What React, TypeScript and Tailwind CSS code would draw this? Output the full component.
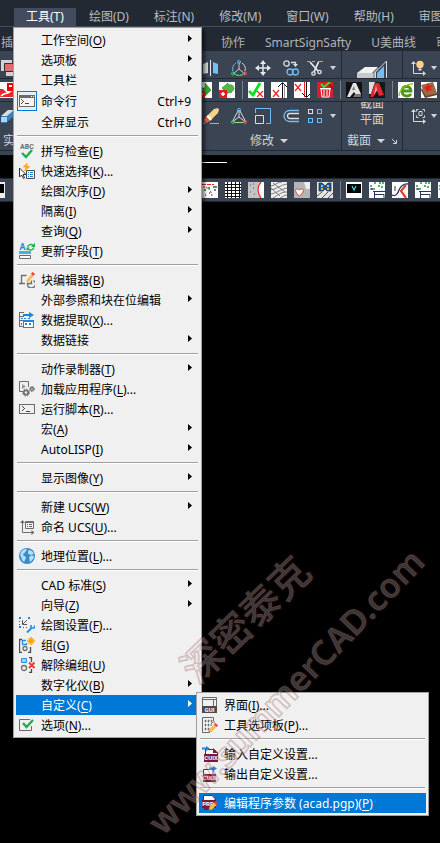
import { ReactNode } from 'react'

type MenuEntry =
  | { kind: 'separator' }
  | {
      kind: 'item'
      label: string
      mnemonic?: string
      suffix?: string
      icon?: string
      shortcut?: string
      submenu?: boolean
      checked?: boolean
      active?: boolean
    }

const separator: MenuEntry = { kind: 'separator' }

const toolsMenu: MenuEntry[] = [
  { kind: 'item', label: '工作空间', mnemonic: 'O', submenu: true },
  { kind: 'item', label: '选项板', submenu: true },
  { kind: 'item', label: '工具栏', submenu: true },
  { kind: 'item', label: '命令行', icon: 'commandLine', shortcut: 'Ctrl+9', checked: true },
  { kind: 'item', label: '全屏显示', shortcut: 'Ctrl+0' },
  separator,
  { kind: 'item', label: '拼写检查', mnemonic: 'E', icon: 'spelling' },
  { kind: 'item', label: '快速选择', mnemonic: 'K', suffix: '...', icon: 'quickSelect' },
  { kind: 'item', label: '绘图次序', mnemonic: 'D', submenu: true },
  { kind: 'item', label: '隔离', mnemonic: 'I', submenu: true },
  { kind: 'item', label: '查询', mnemonic: 'Q', submenu: true },
  { kind: 'item', label: '更新字段', mnemonic: 'T', icon: 'updateField' },
  separator,
  { kind: 'item', label: '块编辑器', mnemonic: 'B', icon: 'blockEditor' },
  { kind: 'item', label: '外部参照和块在位编辑', submenu: true },
  { kind: 'item', label: '数据提取', mnemonic: 'X', suffix: '...', icon: 'dataExtract' },
  { kind: 'item', label: '数据链接', submenu: true },
  separator,
  { kind: 'item', label: '动作录制器', mnemonic: 'T', submenu: true },
  { kind: 'item', label: '加载应用程序', mnemonic: 'L', suffix: '...', icon: 'loadApp' },
  { kind: 'item', label: '运行脚本', mnemonic: 'R', suffix: '...', icon: 'script' },
  { kind: 'item', label: '宏', mnemonic: 'A', submenu: true },
  { kind: 'item', label: 'AutoLISP', mnemonic: 'I', submenu: true },
  separator,
  { kind: 'item', label: '显示图像', mnemonic: 'Y', submenu: true },
  separator,
  { kind: 'item', label: '新建 UCS', mnemonic: 'W', submenu: true },
  { kind: 'item', label: '命名 UCS', mnemonic: 'U', suffix: '...', icon: 'namedUcs' },
  separator,
  { kind: 'item', label: '地理位置', mnemonic: 'L', suffix: '...', icon: 'globe' },
  separator,
  { kind: 'item', label: 'CAD 标准', mnemonic: 'S', submenu: true },
  { kind: 'item', label: '向导', mnemonic: 'Z', submenu: true },
  { kind: 'item', label: '绘图设置', mnemonic: 'F', suffix: '...', icon: 'drafting' },
  { kind: 'item', label: '组', mnemonic: 'G', icon: 'group' },
  { kind: 'item', label: '解除编组', mnemonic: 'U', icon: 'ungroup' },
  { kind: 'item', label: '数字化仪', mnemonic: 'B', submenu: true },
  { kind: 'item', label: '自定义', mnemonic: 'C', submenu: true, active: true },
  { kind: 'item', label: '选项', mnemonic: 'N', suffix: '...', icon: 'options' },
]

const customizeMenu: MenuEntry[] = [
  { kind: 'item', label: '界面', mnemonic: 'I', suffix: '...', icon: 'gui' },
  { kind: 'item', label: '工具选项板', mnemonic: 'P', suffix: '...', icon: 'toolPalette' },
  separator,
  { kind: 'item', label: '输入自定义设置...', icon: 'importCuix' },
  { kind: 'item', label: '输出自定义设置...', icon: 'exportCuix' },
  separator,
  { kind: 'item', label: '编辑程序参数 (acad.pgp)', mnemonic: 'P', icon: 'pgp', active: true },
]

const menuBar = ['工具(T)', '绘图(D)', '标注(N)', '修改(M)', '窗口(W)', '帮助(H)', '审图标记']
const ribbonTabs = ['协作', 'SmartSignSafty', 'U美曲线', '审图']

const pencil = (
  <g>
    <path d="M6.5 15.5 7.5 12 12 7.5 14.5 10 10 14.5Z" fill="#f6bd4a" />
    <path d="m12 7.5 1.5-1.5 2.5 2.5-1.5 1.5Z" fill="#ee3b3b" />
    <path d="m6.5 15.5.5-2 1.5 1.5Z" fill="#666" />
  </g>
)

const cuixPage = (
  <g>
    <path d="M3.5 9V3.500H12L15.500 7v2Z" fill="#fff" stroke="#7a1b36" />
    <path d="M11 2l5 5h-5Z" fill="#7a1b36" />
    <path d="M2 8h14v8H2Z" fill="#7a1b36" />
    <text x="9" y="14" fontSize="6" fontWeight="700" textAnchor="middle" fill="#fff">
      CUIX
    </text>
  </g>
)

const glyphs: Record<string, ReactNode> = {
  // menu icons
  commandLine: (
    <g shapeRendering="crispEdges">
      <path d="M0 2h16v12H0Z" fill="#6a6a6a" />
      <path d="M1 5h14v8H1Z" fill="#f4f4f4" />
      <path d="M12 3h1v1h-1ZM14 3h1v1h-1Z" fill="#fff" />
      <path d="M2 6h1v1H2ZM3 7h1v1H3ZM4 8h1v1H4ZM3 9h1v1H3ZM2 10h1v1H2ZM6 10h4v1H6Z" fill="#444" />
    </g>
  ),
  spelling: (
    <g>
      <text x="8" y="5.500" fontSize="7" fontWeight="700" textAnchor="middle" fill="#6b6b6b">
        ABC
      </text>
      <path d="m3 10 4 4 6-7" fill="none" stroke="#22ad4e" strokeWidth="2.400" />
    </g>
  ),
  quickSelect: (
    <g>
      <path d="m8.500 0-4.500 4h3L5.500 8l5.500-4.500H8Z" fill="#fba615" stroke="#fba615" strokeWidth=".5" />
      <path d="M.5 5v9l2-2 2 3.500 1-.5-1.500-3.500H7Z" fill="#fff" stroke="#333" />
      <path d="M7.500 7.500h8v8h-8Z" fill="#fff" stroke="#4b4b4b" />
      <path d="M9 9.500h1m1 0h3M9 11.500h1m1 0h3M9 13.500h1m1 0h3" stroke="#1c7fd6" />
    </g>
  ),
  updateField: (
    <g>
      <text x="3.500" y="7" fontSize="9" fontWeight="700" textAnchor="middle" fill="#2b86cf">
        A
      </text>
      <path d="M8.500 4a3.500 3 0 0 1 6-1.500M15 4.500a3.500 3 0 0 1-6 1.500" fill="none" stroke="#25ad52" strokeWidth="1.300" />
      <path d="M16 0v4h-4ZM7.500 8V4.500H11Z" fill="#25ad52" />
      <path d="M0 8h12v3H0Z" fill="#55aae4" />
      <path d="M.5 12.500h11v3H.5Z" fill="#fff" stroke="#6a6a6a" />
    </g>
  ),
  blockEditor: (
    <g fill="none" stroke="#6d6d6d">
      <path d="M2.500 11.500v-8h5M0 11.500h6" strokeWidth="1.300" />
      <path d="M14.500 8.500a4 4 0 1 1-6 3h4v-3" strokeWidth="1.300" />
      <path d="m7.500 8 5-6 2 2-5 6-2 .5Z" fill="#f7be50" stroke="none" />
      <path d="m12 1.500 1.500-1.500L16 2l-1.500 2Z" fill="#ee3b3b" stroke="none" />
    </g>
  ),
  dataExtract: (
    <g shapeRendering="crispEdges">
      <path d="M5 .5H.5v14H4M.5 4.500H5M.5 8.500H4" stroke="#6a6a6a" fill="none" />
      <path d="M4 2h6v2H4Z" fill="#1c86de" />
      <path d="M10 0l5 3-5 3Z" fill="#1c86de" shapeRendering="auto" />
      <path d="M2 6h2v1H2ZM5 6h2v1H5ZM9 6h2v1H9ZM2 11h1v2H2Z" fill="#1c86de" />
      <path d="M4 8h11v8H4Z" fill="#1c86de" />
      <path d="M5 10h9v5H5Z" fill="#fff" />
      <path d="M6 11h2v2H6ZM10 11h2v2h-2Z" fill="#1c86de" />
    </g>
  ),
  loadApp: (
    <g fill="none" stroke="#6d6d6d">
      <path d="M4 10.500H.5V.5h9V6" />
      <path d="M3 3v5l4-2.500Z" fill="#999" stroke="none" />
      <circle cx="7" cy="11.500" r="2.200" strokeWidth="1.800" />
      <circle cx="7" cy="11.500" r="3.600" strokeDasharray="1.400 1.400" />
      <circle cx="13" cy="8" r="1.500" strokeWidth="1.300" />
      <circle cx="13" cy="8" r="2.500" strokeDasharray="1 1" />
    </g>
  ),
  script: (
    <g shapeRendering="crispEdges">
      <path d="M.5 3.500h15v9H.5Z" fill="none" stroke="#6a6a6a" />
      <path d="M3 5h1v1H3ZM4 6h1v1H4ZM5 7h1v1H5ZM4 8h1v1H4ZM3 9h1v1H3ZM7 10h4v1H7Z" fill="#444" />
    </g>
  ),
  namedUcs: (
    <g fill="none" stroke="#6d6d6d">
      <path d="M3.500 2v11.500H14" />
      <path d="m1 4 2.500-3L6 4Zm11.500 7 3 2.500-3 2.500Z" fill="#6d6d6d" stroke="none" />
      <path d="M6.500 2.500h8v7h-8ZM6 3.500h9" />
      <path d="M8 5.500h1m1 0h3m-5 2h1m1 0h3" />
    </g>
  ),
  globe: (
    <g>
      <circle cx="8" cy="8" r="8" fill="#3989c9" />
      <path d="M2 4c2-3 4-3 6-3-1 2-1 3-2 3 0 2-2 1-2 3 1 1 3 1 3 3-1 1-1 3-2 4-2-1-2-3-3-5S1 6 2 4ZM10 2c2 0 4 2 5 4-2 0-2 1-3 1-1-1-3 0-3-2s0-2 1-3ZM11 8c2-1 4 0 4 1-1 3-3 4-4 5-1-1 0-3-1-4Z" fill="#b3def8" />
    </g>
  ),
  drafting: (
    <g>
      <path d="M0 0h2v2H0ZM9 0h2v2H9ZM0 9h2v2H0Z" fill="#1c86de" />
      <path d="M4 10.500h1m2 0h1M.5 4v1m0 2v1" stroke="#555" />
      <path d="m8 3-4 4M3.500 3v4.500H8" fill="none" stroke="#555" />
      <path d="m8 15.500 4.500-4.500" stroke="#2f8fde" strokeWidth="2" />
      <path d="M12 8v3h3L16 8.500" fill="none" stroke="#2f8fde" strokeWidth="1.600" />
    </g>
  ),
  group: (
    <g fill="none">
      <path d="M3 2.500H.5v13H3M9 15.500h2.500V10" stroke="#4a4a4a" strokeWidth="1.300" />
      <path d="M7 3.500H3.500v4h4V6" stroke="#2b8fe0" strokeWidth="1.300" />
      <circle cx="6" cy="11.500" r="2" stroke="#707070" strokeWidth="1.300" />
      <path d="M12 0v8M8 4h8M9.500 1.500l5 5M14.500 1.500l-5 5" stroke="#fba615" strokeWidth="1.600" />
    </g>
  ),
  ungroup: (
    <g fill="none">
      <path d="M10 .5h2.500V5M10 15.500h2.500V12" stroke="#4a4a4a" strokeWidth="1.300" />
      <path d="M2.500 1.500h5v4h-5Z" fill="#9fd0f5" stroke="#2b8fe0" />
      <circle cx="5" cy="11" r="2.500" stroke="#707070" strokeWidth="1.300" />
      <path d="m10 5.500 5.500 5.500m0-5.500L10 11" stroke="#ee3b3b" strokeWidth="2" />
    </g>
  ),
  options: (
    <g fill="none">
      <path d="M11 2.500H.5v11h12V9" stroke="#6a6a6a" />
      <path d="m4 6 3.500 4L14 3" stroke="#22ad4e" strokeWidth="2.400" />
    </g>
  ),
  gui: (
    <g>
      <path d="M.5.5h14v14H.5ZM0 2.500h15M11.500 3v6" fill="none" stroke="#6a6a6a" />
      <path d="M0 9h15v7H0Z" fill="#4a4a4a" />
      <text x="7.500" y="15" fontSize="6" fontWeight="700" textAnchor="middle" fill="#fff">
        GUI
      </text>
    </g>
  ),
  toolPalette: (
    <g>
      <path d="M8 15.500H.5V.5h11V4" fill="none" stroke="#6a6a6a" />
      <path d="M3 3h1v2H3ZM6 3h1v2H6ZM9 3h1v2H9ZM3 7h1v2H3ZM6 7h1v2H6ZM3 11h1v2H3ZM6 11h1v2H6Z" fill="#6a6a6a" stroke="#6a6a6a" strokeWidth=".5" />
      <path d="M9 9c0-3 1-4 4-4" fill="none" stroke="#777" />
      {pencil}
    </g>
  ),
  importCuix: (
    <g>
      {cuixPage}
      <path d="M0 1.500h4V0l4 2.500L4 5V3.500H0Z" fill="#1c86de" />
    </g>
  ),
  exportCuix: (
    <g transform="translate(-1 0)">
      <path d="M2.500 9V3.500H12V9Z" fill="#fff" stroke="#7a1b36" />
      <path d="M2 8h13v8H2Z" fill="#7a1b36" />
      <text x="8.500" y="14" fontSize="6" fontWeight="700" textAnchor="middle" fill="#fff">
        CUIX
      </text>
      <path d="M8 1.500h4V0l4 2.500L12 5V3.500H8Z" fill="#1c86de" />
    </g>
  ),
  pgp: (
    <g>
      <path d="M1.500 6V.5H10l3 3V6" fill="#fff" stroke="#7a1b36" />
      <path d="M0 5h14v8H0Z" fill="#7a1b36" />
      <path d="M2 14h6" stroke="#7a1b36" strokeWidth="2" />
      <text x="6" y="11" fontSize="6" fontWeight="700" textAnchor="middle" fill="#fff">
        PRP
      </text>
      {pencil}
    </g>
  ),

  // ribbon icons
  union: (
    <g>
      <path d="M1 0h11v11H1Z" fill="#d2d2d2" />
      <path d="M6 12h8v4H6Z" fill="#d0d0d0" />
      <path d="M4.500 3.500h9v8h-9Z" fill="#e5696c" stroke="#333" />
    </g>
  ),
  solid: (
    <g>
      <path d="m1 9 7-7h6v6l-8 7H1Z" fill="#3f7fb6" />
      <path d="m1 8 7-6h6l-7 6H1Z" fill="#d9dde2" />
      <path d="M1 9h6v5H1Z" fill="#a9d6f7" />
    </g>
  ),
  mirror: (
    <g>
      <path d="m0 4 5-2v11l-5 1Z" fill="#d2d2d2" />
      <path d="M7.500 0v16" stroke="#e8e8e8" />
      <path d="m10 2 5 2v10l-5-1Z" fill="#74bdf5" />
    </g>
  ),
  rotate3d: (
    <g fill="none">
      <path d="M8 2v7M8 9l-6 5M8 9l6 5" stroke="#c7cbd1" />
      <path d="M5 3C2 5 1 8 2 11" stroke="#7cbdf0" />
      <path d="M11 3c3 2 4 5 3 8" stroke="#d6dade" />
      <path d="M4 14c3 2 6 2 8 0" stroke="#40c57c" strokeWidth="1.300" />
      <circle cx="8" cy="2" r="1.500" stroke="#61b5f4" />
      <circle cx="2" cy="13.500" r="1.500" stroke="#40c57c" />
      <circle cx="14" cy="13.500" r="1.500" stroke="#ee6262" />
    </g>
  ),
  move: (
    <g fill="none" stroke="#e6e6e6">
      <path d="M8 2v12M2 8h12" strokeWidth="1.500" />
      <path d="m5 4 3-4 3 4Zm0 8 3 4 3-4ZM4 5 0 8l4 3Zm8 0 4 3-4 3Z" fill="#e6e6e6" stroke="none" />
    </g>
  ),
  copy: (
    <g fill="none" strokeWidth="1.300">
      <circle cx="3.500" cy="3.500" r="2.700" stroke="#dedede" />
      <path d="M8 2.500h4.500V5" stroke="#dedede" />
      <path d="M10 4h5l-2.500 3Z" fill="#dedede" stroke="none" />
      <circle cx="7" cy="12" r="3" stroke="#70bdf5" />
      <circle cx="12.500" cy="12" r="3" stroke="#70bdf5" />
    </g>
  ),
  trim: (
    <g fill="none">
      <path d="M0 1.500h3m2 0h3m3 0h5" stroke="#70bdf5" />
      <path d="m3 2 8 9M11.500 2 7 12" stroke="#e6e6e6" strokeWidth="1.800" />
      <circle cx="6.500" cy="13.500" r="1.700" stroke="#e6e6e6" strokeWidth="1.300" />
      <circle cx="12.500" cy="12" r="1.700" stroke="#e6e6e6" strokeWidth="1.300" />
    </g>
  ),
  erase: (
    <g>
      <path d="m3 9 8-8 4-1 1 2-1 3-8 8Z" fill="#f5d183" />
      <path d="m3 9 4 4-3 2-3-1v-3Z" fill="#f2543f" />
      <path d="m3.500 8.500 4 4 1.500-1.500-4-4Z" fill="#fff" />
      <path d="M0 15.500h2m5 0h9" stroke="#70bdf5" />
    </g>
  ),
  scale3d: (
    <g fill="none">
      <path d="M7.500 2 1.500 13.500M8.500 2l6 11.500M8 2v7l-6 4.500M8 9l6 4.500" stroke="#dadada" />
      <path d="M3 14.500h10" stroke="#9edb8a" />
      <circle cx="8" cy="1.800" r="1.500" stroke="#61b5f4" />
      <circle cx="2" cy="14" r="1.500" stroke="#40c57c" />
      <circle cx="14" cy="14" r="1.500" stroke="#ee6262" />
    </g>
  ),
  scale: (
    <g fill="none">
      <path d="M.5 5V.5h15v15H11" stroke="#70bdf5" />
      <path d="M.5 7.500h8v8h-8Z" stroke="#dedede" />
    </g>
  ),
  offset: (
    <g fill="none">
      <path d="M16 2.500H6.500a5.500 5.500 0 0 0 0 11H16" stroke="#70bdf5" strokeWidth="1.300" />
      <path d="M16 5.500H7a2.500 2.500 0 0 0 0 5h9" stroke="#dedede" strokeWidth="1.300" />
    </g>
  ),
  array: (
    <g fill="none" shapeRendering="crispEdges">
      <path d="M1.500 1.500h4v4h-4Z" stroke="#dedede" />
      <path d="M10.500 1.500h4v4h-4ZM1.500 10.500h4v4h-4ZM10.500 10.500h4v4h-4Z" stroke="#70bdf5" />
    </g>
  ),
  ucsLight: (
    <g fill="none">
      <path d="M3.500 2v11.500H14" stroke="#d8d8d8" />
      <path d="m1 4 2.500-3L6 4ZM13 11l3 2.500-3 2.500Z" fill="#d8d8d8" />
      <circle cx="10" cy="4.500" r="3.700" fill="#fbd18a" />
      <path d="M8.500 9.500h3" stroke="#e6e6e6" strokeWidth="2" />
    </g>
  ),
  ucsObject: (
    <g fill="none" stroke="#d8d8d8">
      <path d="M3.500 2v11.500H14" />
      <path d="m1 4 2.500-3L6 4ZM13 11l3 2.500-3 2.500Z" fill="#d8d8d8" stroke="none" />
      <path d="M6.500 3.500v-2h2m4 0h2v2m0 4v2h-2m-4 0h-2v-2M9 3.500h3v4H9Z" />
    </g>
  ),

  // toolbar icons
  redMail: (
    <g>
      <path d="M0 0h16v16H0Z" fill="#fff" />
      <path d="M0 7h3l4 4 6-2v6H0Z" fill="#e52a2a" />
      <path d="M7 1h6v8H7Z" fill="#e00" />
      <path d="M9 3h3v2H9Z" fill="#fff" />
      <path d="M1 14c3-4 7-2 9-4" stroke="#fff" strokeWidth="1.500" fill="none" />
    </g>
  ),
  arrowRight: (
    <g>
      <path d="M0 0h16v16H0Z" fill="#fff" />
      <path d="M3 6h6V1l6 7-6 6v-4H3Z" fill="#3ba32e" stroke="#1f7418" strokeWidth=".6" />
      <path d="M0 9h9v7H0Z" fill="#e21c1c" />
      <path d="M3 12h4M5 10v5" stroke="#fff" />
    </g>
  ),
  arrowLeft: (
    <g>
      <path d="M0 0h16v16H0Z" fill="#fff" />
      <path d="m3 6 6-5v2c4-1 6 1 6 4l-3 4-3-1v2Z" fill="#55b743" stroke="#2c8320" strokeWidth=".6" />
      <path d="M0 8h8v8H0Z" fill="#e21c1c" />
      <path d="M2 12h4M4 10v4" stroke="#fff" strokeWidth="1.500" />
    </g>
  ),
  checkCross: (
    <g fill="none">
      <path d="M0 0h16v16H0Z" fill="#fff" />
      <path d="m1 9 4 4 7-12" stroke="#00e51b" strokeWidth="2.800" />
      <path d="m9 9 6 6m0-6-6 6" stroke="#e22" strokeWidth="1.200" />
    </g>
  ),
  crossUp: (
    <g fill="none">
      <path d="M0 0h16v16H0Z" fill="#fff" />
      <path d="m2 8 6 7m0-7-6 7" stroke="#e22" strokeWidth="1.200" />
      <path d="M11.500 16V1M7 5l4.500-4.500L16 5" stroke="#111" />
      <path d="M13.500 3v13" stroke="#999" />
    </g>
  ),
  crossDown: (
    <g fill="none">
      <path d="M0 0h16v16H0Z" fill="#fff" />
      <path d="m1 2 6 7m0-7-6 7" stroke="#e22" strokeWidth="1.200" />
      <path d="M10.500 0v15" stroke="#e22" />
      <path d="M12.500 0v15M8 11l4.500 4.500L16 12" stroke="#111" />
    </g>
  ),
  trash: (
    <g fill="none">
      <path d="M0 0h16v16H0Z" fill="#d71f2b" />
      <path d="M4 7h9l-1 8H5ZM3 6.500h11M7 8v6M10 8v6" stroke="#fff" />
      <path d="m4 2 3 3 6-5" stroke="#3add2c" strokeWidth="2" />
      <path d="M12 3c2 0 3 2 3 4" stroke="#3a0c0c" />
    </g>
  ),
  cadGrey: (
    <g>
      <path d="M0 0h16v16H0Z" fill="#111" />
      <path d="M1 15 7 1h3l5 11-5 1-2-3-4 5Z" fill="#e3e3e3" />
      <path d="m8 4 1 4H6ZM9 12h6v3H7Z" fill="#777" />
    </g>
  ),
  cadRed: (
    <g>
      <path d="M0 0h16v16H0Z" fill="#171717" />
      <path d="M0 0h6L2 12H0Z" fill="#ddd" />
      <path d="M1 15 6 1h4l5 12-5 1-2-5-4 6Z" fill="#df2731" />
      <path d="m7 3 1 5-3 5Z" fill="#f3a4a8" />
    </g>
  ),
  browser: (
    <g fill="none">
      <path d="M0 0h16v16H0Z" fill="#fff" />
      <path d="M13 12c-2 3-9 3-9-3s9-6 9 0H5" stroke="#4e9a16" strokeWidth="2.800" />
      <path d="M1 14C1 8 9 1 15 2" stroke="#83bd2e" strokeWidth="1.300" />
    </g>
  ),
  book: (
    <g>
      <path d="M0 0h16v16H0Z" fill="#fff" />
      <path d="m0 3 12-3 4 11-11 4Z" fill="#9b6b45" />
      <path d="m1 6 4 8 11-3v2L4 16 0 8Z" fill="#684226" />
      <path d="m7 1 1 3 4-1-3 3 3 3-4-1-2 3-1-4-3-1 3-1Z" fill="#ed1818" />
    </g>
  ),
  monitor: (
    <g>
      <path d="M0 0h16v16H0Z" fill="#eee" />
      <path d="M0 2h4v9H0Z" fill="#000" />
    </g>
  ),
  scatter: (
    <g fill="none">
      <path d="M0 0h16v16H0Z" fill="#fff" />
      <path d="M0 2.500h12" stroke="#e52222" strokeDasharray="4 1" />
      <path d="M1 5c5 0 8 3 9 9" stroke="#e52222" strokeDasharray="2 1" />
      <path d="M2 8h2m2-2h2m4 2h2m-7 3h1m3-6h4M3 13h1" stroke="#24703c" strokeWidth="1.400" />
    </g>
  ),
  mesh: (
    <g>
      <path d="M0 0h16v16H0Z" fill="#fff" />
      <path d="M2.500 0v16M6.500 0v16M10.500 0v16M14.500 0v16M0 2.500h16M0 5.500h16M0 8.500h16M0 11.500h16M0 14.500h16" stroke="#111" />
    </g>
  ),
  gravel: (
    <g fill="none">
      <path d="M0 0h16v16H0Z" fill="#c3c3c3" />
      <path d="M16 0h-4C8 4 8 12 12 16h4Z" fill="#fff" />
      <path d="M13 0c-4 4-4 12 0 16" stroke="#ee3333" strokeWidth="1.500" />
      <path d="M2 3h1m2 3h1m-4 4h1m3 2h1m-2-10h1" stroke="#555" />
    </g>
  ),
  hatch: (
    <g fill="none" stroke="#666" strokeWidth=".8">
      <path d="M0 0h16v16H0Z" fill="#eee" stroke="none" />
      <path d="M0 4c5-1 6-4 11-4M0 8C6 7 9 3 16 2M0 12c7-1 9-5 16-6M2 16c5-3 8-6 14-6M9 16c3-1 4-3 7-3M2 1l12 9M0 6l9 8" />
    </g>
  ),
  heart: (
    <g>
      <path d="M0 0h16v16H0Z" fill="#b5b5b5" />
      <path d="M10 0h6v7h-4Z" fill="#eee" />
      <path d="M5.500 14C-1 9 2 5 5.500 8 9 5 12 9 5.500 14Z" fill="#fff" stroke="#e33" />
    </g>
  ),
  butterfly: (
    <g>
      <path d="M0 0h16v16H0Z" fill="#e4e4e4" />
      <path d="m0 14 5-4m0 6 6-6m0 6 5-5" stroke="#555" />
      <path d="M2 1h3l3 3 3-3h3v8h-4L8 7 6 9H2Z" fill="#215b86" stroke="#222" strokeWidth=".7" />
      <path d="M4 3h2v2H4ZM10 3h2v2h-2Z" fill="#76c9ef" />
      <path d="M4 6h2v2H4ZM10 6h2v2h-2Z" fill="#f4aa34" />
    </g>
  ),
  console: (
    <g>
      <path d="M0 0h16v16H0Z" fill="#fff" />
      <path d="M1 2h14v9H1Z" fill="#000" />
      <path d="m6 4 2 4 2-4" fill="none" stroke="#33d4d4" strokeWidth="1.300" />
    </g>
  ),
  plan: (
    <g fill="none">
      <path d="M0 0h16v16H0Z" fill="#fff" />
      <path d="M1 4h3m1-3h3m1 3h3m-2-3h5M2 7h4m6-2h2" stroke="#259b3c" strokeWidth="1.600" strokeDasharray="2 1" />
      <path d="M4 9.500h12M5.500 9v7M5 12.500h10V16M1 7h4" stroke="#26365e" />
    </g>
  ),
  brush: (
    <g fill="none">
      <path d="M0 0h16v16H0Z" fill="#fff" />
      <path d="M0 13c4 2 6-2 7-5s5-7 9-6" stroke="#29335f" strokeWidth="1.300" />
      <path d="M3 4v5" stroke="#333" />
      <path d="m14 3-5 6 5 7" stroke="#de442b" strokeWidth="2.200" />
    </g>
  ),
}

function Glyph({ name, className = 'h-4 w-4' }: { name: string; className?: string }) {
  return (
    <svg viewBox="0 0 16 16" preserveAspectRatio="xMinYMin slice" className={`block shrink-0 font-[Roboto,sans-serif] ${className}`} aria-hidden="true">
      {glyphs[name]}
    </svg>
  )
}

function DropArrow({ label }: { label: string }) {
  return (
    <button type="button" aria-label={label} className="block shrink-0">
      <svg viewBox="0 0 6 4" className="block h-1 w-1.5" fill="#d0d3d8" aria-hidden="true">
        <path d="M0 0h6L3 4Z" />
      </svg>
    </button>
  )
}

function Toolbar({ left, leftClass, icons, iconsClass }: { left: string; leftClass: string; icons: string[]; iconsClass: string }) {
  return (
    <div role="toolbar" className="flex h-[24px] items-center overflow-hidden border-y border-[#222933] bg-[#3b4453]">
      <Glyph name={left} className={`h-4 ${leftClass}`} />
      <div className={`flex shrink-0 items-center ${iconsClass}`}>
        {icons.map((name, i) =>
          name === '|' ? (
            <span key={i} className="mr-[5px] h-[18px] w-px bg-[#7a808a]" />
          ) : (
            <button key={i} type="button" aria-label={name} className="mr-[7px]">
              <Glyph name={name} />
            </button>
          ),
        )}
      </div>
    </div>
  )
}

function ToolGroups({ groups }: { groups: string[][] }) {
  return (
    <div className="flex items-center gap-3">
      {groups.map((group) => (
        <div key={group[0]} className="flex gap-2">
          {group.map((name) => (
            <button key={name} type="button" aria-label={name}>
              <Glyph name={name} />
            </button>
          ))}
        </div>
      ))}
    </div>
  )
}

function Menu({ entries, label }: { entries: MenuEntry[]; label: string }) {
  return (
    <div
      role="menu"
      aria-label={label}
      className="w-full border border-[#a0a0a0] bg-[#f0f0f0] p-0.5 text-xs text-black shadow-[3px_3px_3px_rgba(0,0,0,0.5)]"
    >
      {entries.map((entry, i) => {
        if (entry.kind === 'separator') {
          return (
            <div key={i} role="separator" className="mx-px h-[9px] pt-[3px]">
              <div className="h-0.5 border-t border-b border-t-[#a0a0a0] border-b-white" />
            </div>
          )
        }
        return (
          <button
            key={i}
            type="button"
            role="menuitem"
            className={`flex w-full items-center pl-[3px] text-left whitespace-nowrap ${entry.checked ? 'h-[22px]' : 'h-5'} ${
              entry.active ? 'bg-[#0078d7] text-white' : ''
            }`}
          >
            <span className="flex w-[22px] shrink-0">
              {entry.icon && (
                <span className={entry.checked ? 'bg-[#e2eefa] outline-1 outline-offset-1 outline-[#0078d7]' : ''}>
                  <Glyph name={entry.icon} />
                </span>
              )}
            </span>
            <span className="pt-0.5">
              {entry.label}
              {entry.mnemonic && (
                <>
                  (<u className="underline-offset-2">{entry.mnemonic}</u>)
                </>
              )}
              {entry.suffix}
            </span>
            {entry.shortcut && <span className="ml-auto pt-0.5 pr-2">{entry.shortcut}</span>}
            {entry.submenu && (
              <svg viewBox="0 0 4 7" className="mr-[7px] mb-1 ml-auto h-[7px] w-1" fill="currentColor" aria-hidden="true">
                <path d="M0 0v7l4-3.500Z" />
              </svg>
            )}
          </button>
        )
      })}
    </div>
  )
}

function App() {
  return (
    <div className="relative min-h-screen overflow-hidden bg-black font-['Noto_Sans','Noto_Sans_CJK_SC',sans-serif] text-xs text-[#d0d3d8]">
      <header className="bg-[#222933]">
        <nav className="flex h-[27px] items-end gap-px overflow-hidden border-b border-[#444c59] pl-[14px]">
          {menuBar.map((item, i) => (
            <button
              key={item}
              type="button"
              className={`h-[18px] shrink-0 px-3 whitespace-nowrap ${i === 0 ? 'bg-[#434c5e] text-white' : 'text-[#b8bcc2]'}`}
            >
              {item}
            </button>
          ))}
        </nav>
        <div className="flex h-6 items-end overflow-hidden whitespace-nowrap text-[#b0b4ba]">
          <button type="button" className="w-[221px] shrink-0 pl-px text-left">
            插入
          </button>
          <div className="flex shrink-0 gap-5">
            {ribbonTabs.map((tab) => (
              <button key={tab} type="button">
                {tab}
              </button>
            ))}
          </div>
        </div>
      </header>

      <section className="flex h-[27px] bg-[#3b4453]">
        <div className="flex w-[342px] shrink-0 items-end border-r border-[#222933] pb-0.5">
          <Glyph name="union" className="h-4 w-[13px]" />
          <div className="ml-auto">
            <ToolGroups groups={[['mirror'], ['rotate3d', 'move'], ['copy', 'trim']]} />
          </div>
          <div className="mb-1.5 pr-[5px] pl-[7px]">
            <DropArrow label="修剪选项" />
          </div>
        </div>
        <button type="button" aria-label="截面平面" className="flex w-[61px] shrink-0 items-end justify-center border-r border-[#222933]">
          <svg viewBox="0 0 30 18" className="h-[18px] w-[30px]" aria-hidden="true">
            <path d="m0 13 8-6h13l-6 6H0Z" fill="#f1f1f1" />
            <path d="M0 13h16v5H0Z" fill="#c5c8cc" />
            <path d="m16 13 5-5v10h-5Z" fill="#a2a6ad" />
            <path d="M18.500 18v-6L29.500 1v17" fill="#3b4453" stroke="#d8dadd" />
            <path d="M20 18v-5l7-7v12Z" fill="#74bdf5" />
          </svg>
        </button>
        <div className="flex flex-1 items-end pb-0.5 pl-[7px]">
          <button type="button" aria-label="UCS">
            <Glyph name="ucsLight" />
          </button>
          <div className="mb-1.5 pl-[5px]">
            <DropArrow label="UCS 选项" />
          </div>
        </div>
      </section>

      <Toolbar
        left="redMail"
        leftClass="w-[13px]"
        iconsClass="pl-[183px]"
        icons={['arrowRight', 'arrowLeft', '|', 'checkCross', 'crossUp', 'crossDown', 'trash', '|', 'cadGrey', 'cadRed', '|', 'browser', 'book']}
      />

      <section className="flex h-[53px] border-b-4 border-[#3b4453] bg-[#3b4453]">
        <div className="flex w-[342px] shrink-0 flex-col justify-between border-r border-b border-[#222933] pt-1.5">
          <div className="flex items-center">
            <Glyph name="solid" className="h-4 w-[13px]" />
            <div className="ml-auto">
              <ToolGroups groups={[['erase'], ['scale3d', 'scale'], ['offset', 'array']]} />
            </div>
            <div className="pr-[5px] pl-[7px]">
              <DropArrow label="阵列选项" />
            </div>
          </div>
          <div className="flex items-center pb-px pl-[3px]">
            <span className="w-[247px]">实体编辑</span>
            <button type="button" className="flex items-center gap-1.5">
              修改
              <svg viewBox="0 0 8 4" className="h-1 w-2" fill="#d0d3d8" aria-hidden="true">
                <path d="M0 0h8L4 4Z" />
              </svg>
            </button>
          </div>
        </div>
        <div className="flex w-[61px] shrink-0 flex-col justify-between overflow-hidden border-r border-b border-[#222933]">
          <div className="flex h-[26px] flex-col justify-end overflow-hidden text-center leading-4">
            <span>截面</span>
            <span>平面</span>
          </div>
          <div className="flex items-center pb-px pl-[5px]">
            <button type="button" className="flex items-center gap-1.5">
              截面
              <svg viewBox="0 0 8 4" className="h-1 w-2" fill="#d0d3d8" aria-hidden="true">
                <path d="M0 0h8L4 4Z" />
              </svg>
            </button>
            <button type="button" aria-label="截面设置" className="ml-[7px]">
              <svg viewBox="0 0 5 5" className="block h-[5px] w-[5px]" fill="none" stroke="#d0d3d8" aria-hidden="true">
                <path d="m0 0 4 4M4.500 1v3.500H1" />
              </svg>
            </button>
          </div>
        </div>
        <div className="flex flex-1 items-start border-b border-[#222933] pt-1.5 pl-[7px]">
          <button type="button" aria-label="UCS 对象">
            <Glyph name="ucsObject" />
          </button>
          <div className="pt-1.5 pl-[5px]">
            <DropArrow label="UCS 对象选项" />
          </div>
        </div>
      </section>

      <div className="h-[23px] pt-[7px] pl-[180px]">
        <div className="h-px w-[47px] bg-white" />
      </div>

      <Toolbar
        left="monitor"
        leftClass="w-[5px]"
        iconsClass="pl-[197px]"
        icons={['scatter', 'mesh', 'gravel', 'hatch', 'heart', 'butterfly', '|', 'console', 'plan', 'brush', 'plan', 'plan']}
      />

      <div className="absolute top-[27px] left-[13px] w-[189px]">
        <Menu entries={toolsMenu} label="工具" />
      </div>
      <div className="absolute top-[692px] left-[196px] w-[233px]">
        <Menu entries={customizeMenu} label="自定义" />
      </div>

      {/* watermark */}
      <svg
        viewBox="0 0 300 313"
        className="pointer-events-none absolute top-[530px] left-[140px] h-[313px] w-[300px]"
        fill="#fff"
        fillOpacity="0.24"
        stroke="#6e2020"
        strokeOpacity="0.25"
        strokeWidth="2"
        paintOrder="stroke"
        textAnchor="middle"
      >
        <text transform="translate(116 100) rotate(-44)" fontSize="40" fontWeight="500">
          深密泰克
        </text>
        <text transform="translate(155 170) rotate(-46)" fontSize="34" fontWeight="600">
          www.summerCAD.com
        </text>
      </svg>
    </div>
  )
}

export default App
